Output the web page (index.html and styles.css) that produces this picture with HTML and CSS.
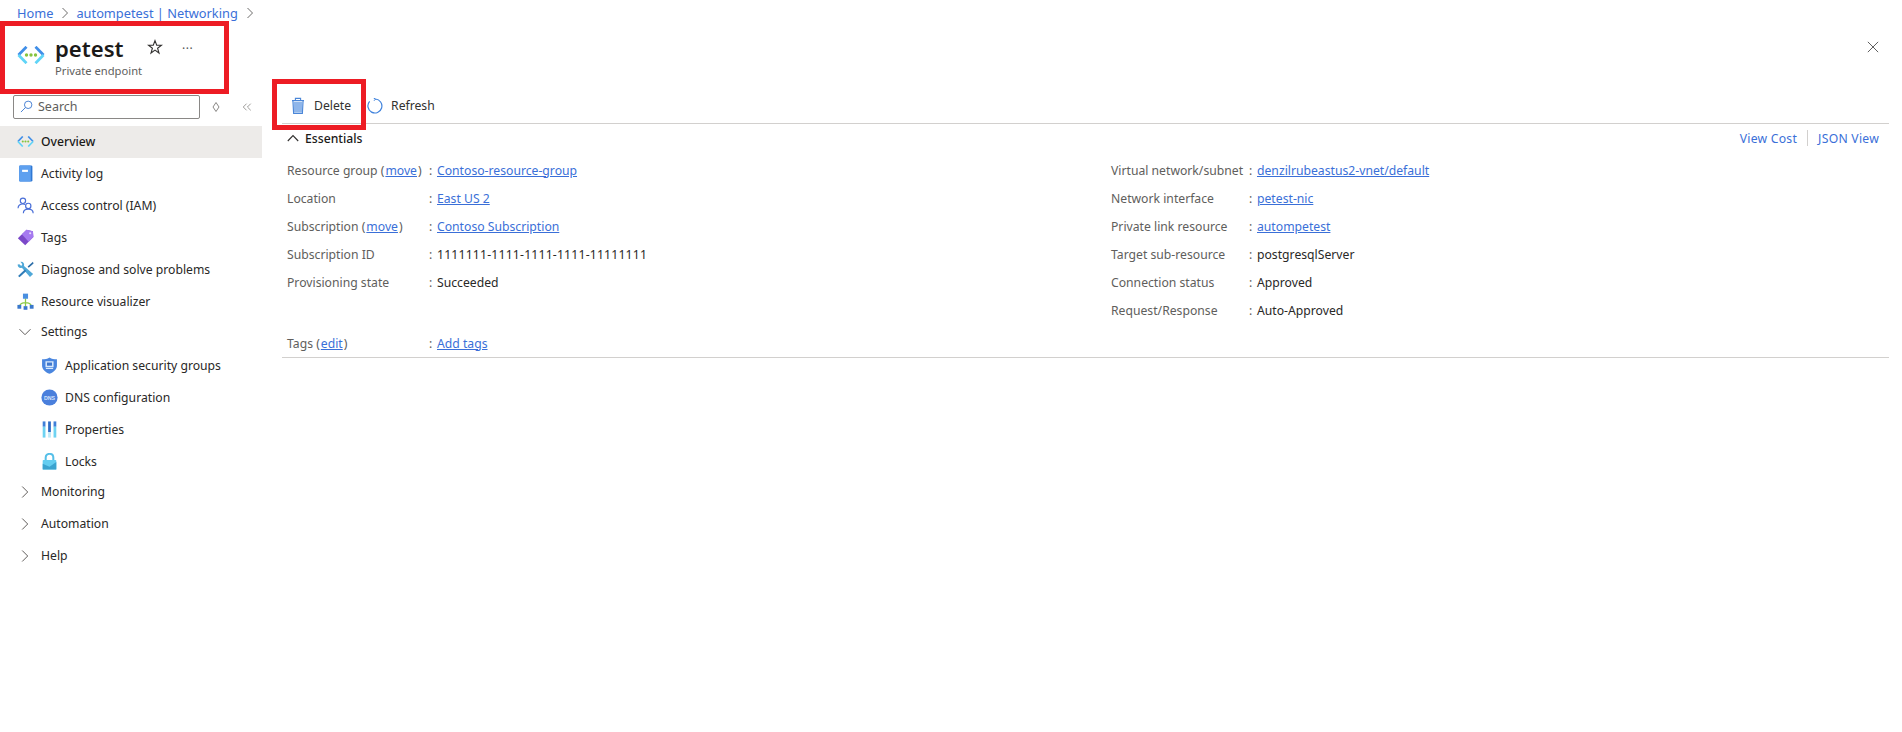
FILE: index.html
```html
<!DOCTYPE html>
<html lang="en">
<head>
<meta charset="utf-8">
<title>petest - Private endpoint</title>
<link rel="stylesheet" href="styles.css">
</head>
<body>
<svg class="defs" width="0" height="0" aria-hidden="true">
  <defs>
    <symbol id="ico-endpoint" viewBox="0 0 28 18">
      <path d="M9.5 0.8 L1.5 9" fill="none" stroke="#3f8ee8" stroke-width="2.8"/>
      <path d="M1.5 9 L9.5 17.2" fill="none" stroke="#5fd4f7" stroke-width="2.8"/>
      <path d="M18.5 0.8 L26.5 9" fill="none" stroke="#3f8ee8" stroke-width="2.8"/>
      <path d="M26.5 9 L18.5 17.2" fill="none" stroke="#5fd4f7" stroke-width="2.8"/>
      <circle cx="9.5" cy="9" r="1.7" fill="#86c43f"/>
      <circle cx="14" cy="9" r="1.7" fill="#86c43f"/>
      <circle cx="18.5" cy="9" r="1.7" fill="#86c43f"/>
    </symbol>
  </defs>
</svg>

<nav class="crumbs">
  <a href="#">Home</a>
  <svg class="crumb-sep" viewBox="0 0 8 12"><path d="M1.5 1 L6.5 6 L1.5 11" /></svg>
  <a href="#">autompetest | Networking</a>
  <svg class="crumb-sep" viewBox="0 0 8 12"><path d="M1.5 1 L6.5 6 L1.5 11" /></svg>
</nav>

<header class="title-bar">
  <svg class="title-icon"><use href="#ico-endpoint"/></svg>
  <div class="title-text">
    <div class="title-line">
      <h1>petest</h1>
      <svg class="star" viewBox="0 0 16 16"><path d="M8 1.6 L9.7 6.2 L14.5 6.2 L10.6 9.2 L12 14 L8 11.1 L4 14 L5.4 9.2 L1.5 6.2 L6.3 6.2 Z"/></svg>
      <span class="more">···</span>
    </div>
    <div class="subtitle">Private endpoint</div>
  </div>
  <svg class="close" viewBox="0 0 14 14"><path d="M1 1 L13 13 M13 1 L1 13"/></svg>
</header>

<div class="layout">
  <aside class="sidebar">
    <div class="search-row">
      <label class="search">
        <svg viewBox="0 0 14 14"><circle cx="8.8" cy="5.2" r="4"/><path d="M5.9 8.1 L1 13"/></svg>
        <span>Search</span>
      </label>
      <svg class="sort" viewBox="0 0 8 12"><path d="M4 1.5 L7 6 L4 10.5 L1 6 Z"/></svg>
      <svg class="collapse" viewBox="0 0 12 10"><path d="M5.5 1 L1.5 5 L5.5 9 M10.5 1 L6.5 5 L10.5 9"/></svg>
    </div>

    <ul class="menu">
      <li class="item active"><svg class="mi overview"><use href="#ico-endpoint"/></svg>Overview</li>
      <li class="item">
        <svg class="mi" viewBox="0 0 16 16"><rect x="2" y="0.5" width="12.5" height="15" rx="1.2" fill="#2f78d4"/><rect x="2" y="0.5" width="11" height="15" rx="1" fill="#5ea0ef"/><rect x="4.8" y="4.5" width="5.5" height="2" fill="#fff"/></svg>
        Activity log
      </li>
      <li class="item">
        <svg class="mi" viewBox="0 0 16 16" fill="none" stroke="#4a6fd8" stroke-width="1.1"><circle cx="5.6" cy="3.6" r="2.5"/><path d="M1 10.5 C1 7.8 3 6.6 5.6 6.6 C6.4 6.6 7 6.7 7.6 7"/><circle cx="10.6" cy="8.4" r="2.5"/><path d="M6 15.2 C6 12.6 8 11.4 10.6 11.4 C13.2 11.4 15.2 12.6 15.2 15.2"/></svg>
        Access control (IAM)
      </li>
      <li class="item">
        <svg class="mi" viewBox="0 0 16 16"><path d="M9 0.8 L15 2 L15.4 7.5 L7.7 15.4 L0.8 8.8 Z" fill="#7b48c8"/><path d="M9 0.8 L15 2 L15.4 7.5 L11 12 L4.5 5 Z" fill="#a67af0"/><circle cx="12.4" cy="4" r="1" fill="#e8dcfa"/></svg>
        Tags
      </li>
      <li class="item">
        <svg class="mi" viewBox="0 0 16 16"><path d="M3.2 0.8 L5 3 L4 4.6 L2.2 3 L0.6 3.4 C0.6 6 2.6 7.2 4.6 6.4 L12.2 15 L15.2 12.2 L6.6 4.6 C7.2 2.4 5.8 0.4 3.2 0.8 Z" fill="#4fa8d8"/><path d="M15 0.8 L10 5.2 L11 6.4 L15.6 2.4 Z" fill="#2c6ea8"/><path d="M7.4 8 L1 14 L2.4 15.4 L8.8 9.4 Z" fill="#2f7cb8"/></svg>
        Diagnose and solve problems
      </li>
      <li class="item">
        <svg class="mi" viewBox="0 0 16 16"><path d="M8 5 V9 M2.4 12.4 C3 10 5 9 8 9 C11 9 13 10 13.6 12.4 M8 9 V13" stroke="#8ccb46" stroke-width="1.2" fill="none"/><rect x="5.6" y="0.6" width="4.8" height="4.8" fill="#4a8fe0"/><rect x="0.4" y="11.2" width="3.6" height="3.6" fill="#3a78cc"/><rect x="12" y="11.2" width="3.6" height="3.6" fill="#3a78cc"/><rect x="6.2" y="12.4" width="3.6" height="3.4" fill="#3a78cc"/></svg>
        Resource visualizer
      </li>
      <li class="group">
        <svg class="chev" viewBox="0 0 12 12"><path d="M0.5 3.2 L6 8.7 L11.5 3.2"/></svg>Settings
      </li>
      <li class="item sub first">
        <svg class="mi" viewBox="0 0 16 16"><path d="M8 0.4 C10 1.8 12.4 2.2 15 2.2 V8 C15 11.8 11.8 14.4 8 15.8 C4.2 14.4 1 11.8 1 8 V2.2 C3.6 2.2 6 1.8 8 0.4 Z" fill="#4a86df"/><rect x="4.2" y="4" width="7.6" height="5.6" fill="#d8e9fb"/><rect x="5.6" y="5.2" width="4.8" height="3" fill="#3f78cf"/><rect x="4.6" y="10.2" width="6.8" height="1.1" fill="#d8e9fb"/></svg>
        Application security groups
      </li>
      <li class="item sub">
        <svg class="mi" viewBox="0 0 16 16"><circle cx="8" cy="8" r="7.6" fill="#4a7fdc"/><text x="8" y="10" class="dns">DNS</text></svg>
        DNS configuration
      </li>
      <li class="item sub">
        <svg class="mi" viewBox="0 0 16 16"><rect x="1.6" y="0.4" width="2.6" height="5" fill="#3f7fd8"/><rect x="1.6" y="5.4" width="2.6" height="10.2" fill="#6ed3f2"/><rect x="6.7" y="0.4" width="2.6" height="10" fill="#2f6cc4"/><rect x="6.7" y="10.4" width="2.6" height="5.2" fill="#bde9f8"/><rect x="11.8" y="0.4" width="2.6" height="5" fill="#3f7fd8"/><rect x="11.8" y="5.4" width="2.6" height="10.2" fill="#6ed3f2"/></svg>
        Properties
      </li>
      <li class="item sub">
        <svg class="mi" viewBox="0 0 16 16"><path d="M4.4 7 V4.4 C4.4 2 6 0.8 8 0.8 C10 0.8 11.6 2 11.6 4.4 V7" fill="none" stroke="#55bfe8" stroke-width="1.9"/><rect x="1.6" y="6.6" width="12.8" height="9" rx="0.8" fill="#63cdf0"/><path d="M1.6 15.6 L1.6 10 L8 13 L14.4 8.4 V15.6 Z" fill="#3aa3cf"/></svg>
        Locks
      </li>
      <li class="group"><svg class="chev" viewBox="0 0 12 12"><path d="M3.2 0.5 L8.7 6 L3.2 11.5"/></svg>Monitoring</li>
      <li class="group"><svg class="chev" viewBox="0 0 12 12"><path d="M3.2 0.5 L8.7 6 L3.2 11.5"/></svg>Automation</li>
      <li class="group"><svg class="chev" viewBox="0 0 12 12"><path d="M3.2 0.5 L8.7 6 L3.2 11.5"/></svg>Help</li>
    </ul>
  </aside>

  <main class="content">
    <div class="toolbar">
      <button class="tool delete">
        <svg viewBox="0 0 16 18"><rect x="3.6" y="5" width="8.8" height="10.4" fill="#8fb6ea"/><path d="M2 3.6 H14 M5.4 3.4 V1.4 H10.6 V3.4 M2.9 3.8 L3.6 16.4 H12.4 L13.1 3.8" fill="none" stroke="#4a86d8" stroke-width="1.1"/></svg>
        Delete
      </button>
      <button class="tool refresh">
        <svg viewBox="0 0 16 16"><path d="M8.4 1 A7 7 0 1 1 2.6 3.4" fill="none" stroke="#3f82dc" stroke-width="1.2"/><path d="M6.6 0 L8.6 1 L7 2.8" fill="none" stroke="#3f82dc" stroke-width="1"/></svg>
        Refresh
      </button>
    </div>

    <section class="essentials">
      <div class="ess-head">
        <div class="ess-title">
          <svg viewBox="0 0 12 8"><path d="M0.8 7 L6 1.6 L11.2 7"/></svg>
          <span>Essentials</span>
        </div>
        <div class="ess-links">
          <a href="#">View Cost</a>
          <i></i>
          <a href="#">JSON View</a>
        </div>
      </div>

      <div class="ess-grid">
        <dl class="col left">
          <div class="row"><dt>Resource group (<a href="#">move</a>)</dt><dd><a href="#">Contoso-resource-group</a></dd></div>
          <div class="row"><dt>Location</dt><dd><a href="#">East US 2</a></dd></div>
          <div class="row"><dt>Subscription (<a href="#">move</a>)</dt><dd><a href="#">Contoso Subscription</a></dd></div>
          <div class="row"><dt>Subscription ID</dt><dd class="digits">1111111-1111-1111-1111-11111111</dd></div>
          <div class="row"><dt>Provisioning state</dt><dd>Succeeded</dd></div>
        </dl>
        <dl class="col right">
          <div class="row"><dt>Virtual network/subnet</dt><dd><a href="#">denzilrubeastus2-vnet/default</a></dd></div>
          <div class="row"><dt>Network interface</dt><dd><a href="#">petest-nic</a></dd></div>
          <div class="row"><dt>Private link resource</dt><dd><a href="#">autompetest</a></dd></div>
          <div class="row"><dt>Target sub-resource</dt><dd>postgresqlServer</dd></div>
          <div class="row"><dt>Connection status</dt><dd>Approved</dd></div>
          <div class="row"><dt>Request/Response</dt><dd>Auto-Approved</dd></div>
        </dl>
      </div>

      <dl class="col tags">
        <div class="row"><dt>Tags (<a href="#">edit</a>)</dt><dd><a href="#">Add tags</a></dd></div>
      </dl>
    </section>
  </main>
</div>

<div class="annot annot-title"></div>
<div class="annot annot-delete"></div>
</body>
</html>
```

FILE: styles.css
```css
* { box-sizing: border-box; }
html, body { margin: 0; height: 100%; background: #fff; overflow: hidden; }
body {
  position: relative;
  font-family: "Noto Sans", "Open Sans", "Liberation Sans", sans-serif;
  font-size: 12.2px;
  color: #292827;
}
a { color: #3a6fd8; text-decoration: none; }
svg { flex: none; display: block; }
.defs { position: absolute; }

.crumbs {
  display: flex;
  align-items: center;
  height: 26px;
  padding: 0 0 1px 17px;
  font-size: 12.8px;
}
.crumb-sep { width: 8px; height: 12px; margin: 0 7px 0 8px; fill: none; stroke: #6d6c6b; stroke-width: 1; }

.title-bar {
  display: flex;
  align-items: flex-start;
  height: 62px;
  padding: 9px 23px 0 17px;
}
.title-icon { width: 28px; height: 18px; margin-top: 11px; margin-right: 10px; }
.title-text { flex: 1; }
.title-line { display: flex; align-items: center; height: 27px; }
h1 { margin: 0; font-size: 22.1px; font-weight: 600; color: #1b1a19; line-height: 27px; width: 92px; }
.star { width: 16px; height: 16px; fill: none; stroke: #323130; stroke-width: 1.1; margin-top: -3px; }
.more { margin-left: 19px; font-size: 12px; color: #555; letter-spacing: 0.5px; }
.subtitle { margin-top: 1px; font-size: 11.2px; color: #605e5c; }
.close { width: 12px; height: 12px; margin-top: 6px; fill: none; stroke: #444; stroke-width: 1; }

.layout { display: flex; }
.sidebar { width: 262px; flex: none; padding-top: 6px; }
.search-row { display: flex; align-items: center; height: 25px; padding-left: 13px; }
.search {
  display: flex;
  align-items: center;
  gap: 5px;
  width: 187px;
  height: 24px;
  padding: 0 0 1px 6px;
  border: 1px solid #8a8886;
  border-radius: 2px;
  color: #605e5c;
  font-size: 12.5px;
}
.search svg { width: 13px; height: 13px; fill: none; stroke: #3f7ad0; stroke-width: 1; }
.sort { width: 8px; height: 12px; margin-left: 12px; fill: none; stroke: #8a8886; stroke-width: 1; }
.collapse { width: 10px; height: 10px; margin-left: 22px; fill: none; stroke: #8a8886; stroke-width: 1; }

.menu { list-style: none; margin: 7px 0 0; padding: 0; }
.item, .group { display: flex; align-items: center; height: 32px; padding: 0 0 1px 17px; }
.item .mi { width: 17px; height: 17px; margin-right: 7px; }
.item .mi.overview { height: 11px; }
.item.active { background: #edebe9; font-weight: 500; color: #1b1a19; }
.item.sub { padding-left: 41px; }
.item.sub .mi { width: 17px; margin-right: 7px; }
.item.sub.first { margin-top: 2px; }
.group .chev { width: 12px; height: 12px; margin: 0 10px 0 2px; fill: none; stroke: #605e5c; stroke-width: 1; }
.group { margin-top: -2px; }
.group + .group { margin-top: 0; }
.dns { font: 700 5px "Liberation Sans", sans-serif; fill: #d6e4fb; text-anchor: middle; }

.content { flex: 1; min-width: 0; padding-left: 20px; padding-right: 13px; }
.toolbar {
  display: flex;
  align-items: center;
  height: 36px;
  border-bottom: 1px solid #d2d0ce;
}
.tool {
  display: flex;
  align-items: center;
  height: 30px;
  padding: 0;
  border: 0;
  background: none;
  font: inherit;
  color: #323130;
}
.tool.delete { gap: 8px; margin-left: 8px; }
.tool.delete svg { width: 16px; height: 18px; }
.tool.refresh { gap: 8px; margin-left: 16px; }
.tool.refresh svg { width: 16px; height: 16px; }

.essentials { border-bottom: 1px solid #d2d0ce; height: 234px; padding-left: 5px; }
.ess-head { display: flex; align-items: center; justify-content: space-between; height: 28px; padding-right: 10px; }
.ess-title { display: flex; align-items: center; gap: 6px; font-weight: 500; color: #1b1a19; }
.ess-title svg { width: 12px; height: 8px; fill: none; stroke: #323130; stroke-width: 1.1; }
.ess-links { display: flex; align-items: center; gap: 10px; }
.ess-links a { letter-spacing: 0.25px; }
.ess-links i { width: 1px; height: 16px; background: #d2d0ce; }

.ess-grid { display: grid; grid-template-columns: 824px 1fr; margin-top: 4px; height: 168px; }
dl { margin: 0; }
.row { display: flex; height: 28px; align-items: center; }
dt { color: #605e5c; white-space: nowrap; width: 142px; }
dd { margin: 0; color: #292827; padding-left: 8px; position: relative; white-space: nowrap; }
dd::before { content: ":"; position: absolute; left: 0; color: #605e5c; }
dd a, dt a { text-decoration: underline; }
dt a { margin: 0 1px; }
dd.digits { letter-spacing: 0.2px; }
.col.right dt { width: 138px; }
.col.tags { margin-top: 5px; }

.annot { position: absolute; border: 5px solid #ed1c24; pointer-events: none; }
.annot-title { left: 0; top: 21px; width: 229px; height: 73px; }
.annot-delete { left: 272px; top: 79px; width: 94px; height: 51px; }
```
